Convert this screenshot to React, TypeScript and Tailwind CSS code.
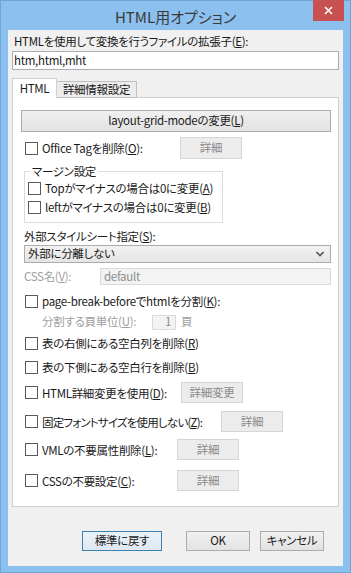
import React from 'react'

const font = { fontFamily: '"Noto Sans CJK JP", "Noto Sans", sans-serif' }

function Check({ label, className }: { label: React.ReactNode; className?: string }) {
    return (
        <div className="flex items-center gap-[4px]">
            <span className="w-[13px] h-[13px] border border-[#5a5a5a] bg-white shrink-0"></span>
            <span className={'leading-[16px] whitespace-nowrap ' + (className ?? '')}>{label}</span>
        </div>
    )
}

function SubButton({ label }: { label: string }) {
    return (
        <div className="h-full w-[62px] flex items-center justify-center border border-[#d5d5d5] bg-[#ececec] text-[#8a8a8a]">
            {label}
        </div>
    )
}

export default function App() {
    return (
        <div
            style={font}
            className="w-[351px] h-[573px] bg-[#8cc0ee] border border-[#6fa5d8] flex flex-col text-[11.5px] tracking-[-0.3px] [font-feature-settings:'palt'] text-[#1a1a1a] select-none"
        >
            {/* Title bar */}
            <div className="relative h-[29px] flex items-center justify-center shrink-0">
                <span className="text-[15px] tracking-normal text-[#3a3a3a] leading-none pt-[1px]">HTML用オプション</span>
                <div className="absolute -top-px right-[6px] w-[31px] h-[21px] bg-[#c75050] flex items-center justify-center">
                    <svg width="9" height="9" viewBox="0 0 9 9">
                        <path d="M1 1 L8 8 M8 1 L1 8" stroke="white" strokeWidth="1.5" />
                    </svg>
                </div>
            </div>

            {/* Client area */}
            <div className="mx-[7px] mb-[6px] flex-1 bg-[#f0f0f0] flex flex-col">
                <div className="pl-[6px] mt-[3px] h-[16px] leading-[16px] whitespace-nowrap">
                    HTMLを使用して変換を行うファイルの拡張子(<u>E</u>):
                </div>
                <div className="ml-[4px] mt-[2px] w-[327px] h-[19px] border border-[#abadb3] bg-white flex items-center pl-[1px] leading-none">
                    htm,html,mht
                </div>

                {/* Tabs */}
                <div className="ml-[4px] mt-[8px] flex items-end h-[20px] relative z-10">
                    <div className="h-[20px] w-[45px] bg-white border border-b-0 border-[#d0d0d0] flex items-center justify-center leading-none">
                        HTML
                    </div>
                    <div className="h-[17px] w-[80px] bg-[#ececec] border border-l-0 border-[#c0c0c0] flex items-center justify-center leading-none">
                        詳細情報設定
                    </div>
                </div>

                {/* Tab panel */}
                <div className="ml-[4px] -mt-px w-[327px] h-[410px] bg-white border border-[#d0d0d0] flex flex-col">
                    <div className="ml-[8px] mt-[12px] w-[310px] h-[22px] border border-[#acacac] bg-gradient-to-b from-[#f0f0f0] to-[#e3e3e3] flex items-center justify-center">
                        layout-grid-modeの変更(<u>L</u>)
                    </div>

                    <div className="mt-[5px] h-[22px] flex items-center ml-[12px]">
                        <div className="w-[155px]">
                            <Check label={<>Office Tagを削除(<u>O</u>):</>} />
                        </div>
                        <SubButton label="詳細" />
                    </div>

                    {/* Margin group */}
                    <div className="relative ml-[11px] mt-[12px] w-[199px] h-[52px] border border-[#dcdcdc] pt-[7px] pl-[3px] flex flex-col gap-[1px]">
                        <span className="absolute -top-[9px] left-[5px] bg-white px-[2px] leading-[16px]">マージン設定</span>
                        <div className="h-[18px] flex items-center">
                            <Check label={<>Topがマイナスの場合は0に変更(<u>A</u>)</>} />
                        </div>
                        <div className="h-[18px] flex items-center">
                            <Check label={<>leftがマイナスの場合は0に変更(<u>B</u>)</>} />
                        </div>
                    </div>

                    <div className="ml-[11px] mt-[5px] h-[16px] leading-[16px]">
                        外部スタイルシート指定(<u>S</u>):
                    </div>
                    <div className="ml-[11px] mt-[1px] w-[307px] h-[18px] border border-[#acacac] bg-gradient-to-b from-[#f2f2f2] to-[#e5e5e5] flex items-center justify-between pl-[3px] pr-[6px]">
                        <span className="leading-none">外部に分離しない</span>
                        <svg width="8" height="6" viewBox="0 0 8 6">
                            <path d="M0.5 1 L4 4.5 L7.5 1" stroke="#555" strokeWidth="1.6" fill="none" />
                        </svg>
                    </div>

                    <div className="ml-[11px] mt-[5px] h-[17px] flex items-center text-[#a0a0a0]">
                        <span className="w-[76px]">CSS名(<u>V</u>):</span>
                        <div className="w-[231px] h-full border border-[#dadada] bg-[#f3f3f3] flex items-center pl-[3px] text-[#8d8d8d] leading-none">
                            default
                        </div>
                    </div>

                    <div className="ml-[12px] mt-[7px] h-[18px] flex items-center">
                        <Check label={<>page-break-beforeでhtmlを分割(<u>K</u>):</>} />
                    </div>

                    <div className="ml-[29px] mt-[4px] h-[16px] flex items-center text-[#a0a0a0]">
                        <span className="w-[110px]">分割する頁単位(<u>U</u>):</span>
                        <div className="w-[24px] h-[15px] border border-[#dadada] bg-[#f3f3f3] flex items-center justify-end pr-[4px] leading-none text-[#8d8d8d]">
                            1
                        </div>
                        <span className="ml-[5px]">頁</span>
                    </div>

                    <div className="ml-[12px] mt-[4px] h-[18px] flex items-center">
                        <Check label={<>表の右側にある空白列を削除(<u>R</u>)</>} />
                    </div>
                    <div className="ml-[12px] mt-[6px] h-[18px] flex items-center">
                        <Check label={<>表の下側にある空白行を削除(<u>B</u>)</>} />
                    </div>

                    <div className="ml-[12px] mt-[6px] h-[21px] flex items-center">
                        <div className="w-[156px]">
                            <Check label={<>HTML詳細変更を使用(<u>D</u>):</>} />
                        </div>
                        <SubButton label="詳細変更" />
                    </div>
                    <div className="ml-[12px] mt-[8px] h-[21px] flex items-center">
                        <div className="w-[196px]">
                            <Check className="tracking-[-0.8px]" label={<>固定フォントサイズを使用しない(<u>Z</u>):</>} />
                        </div>
                        <SubButton label="詳細" />
                    </div>
                    <div className="ml-[12px] mt-[7px] h-[21px] flex items-center">
                        <div className="w-[152px]">
                            <Check label={<>VMLの不要属性削除(<u>L</u>):</>} />
                        </div>
                        <SubButton label="詳細" />
                    </div>
                    <div className="ml-[12px] mt-[10px] h-[21px] flex items-center">
                        <div className="w-[152px]">
                            <Check label={<>CSSの不要設定(<u>C</u>):</>} />
                        </div>
                        <SubButton label="詳細" />
                    </div>
                </div>

                {/* Bottom buttons */}
                <div className="mt-[24px] h-[20px] flex items-center ml-[74px]">
                    <div className="w-[80px] h-full border border-[#3c7fb1] bg-gradient-to-b from-[#eaf2f9] to-[#dfe9f3] flex items-center justify-center">
                        標準に戻す
                    </div>
                    <div className="ml-[24px] w-[64px] h-full border border-[#acacac] bg-gradient-to-b from-[#f0f0f0] to-[#e3e3e3] flex items-center justify-center">
                        OK
                    </div>
                    <div className="ml-[10px] w-[64px] h-full border border-[#acacac] bg-gradient-to-b from-[#f0f0f0] to-[#e3e3e3] flex items-center justify-center">
                        キャンセル
                    </div>
                </div>
            </div>
        </div>
    )
}
